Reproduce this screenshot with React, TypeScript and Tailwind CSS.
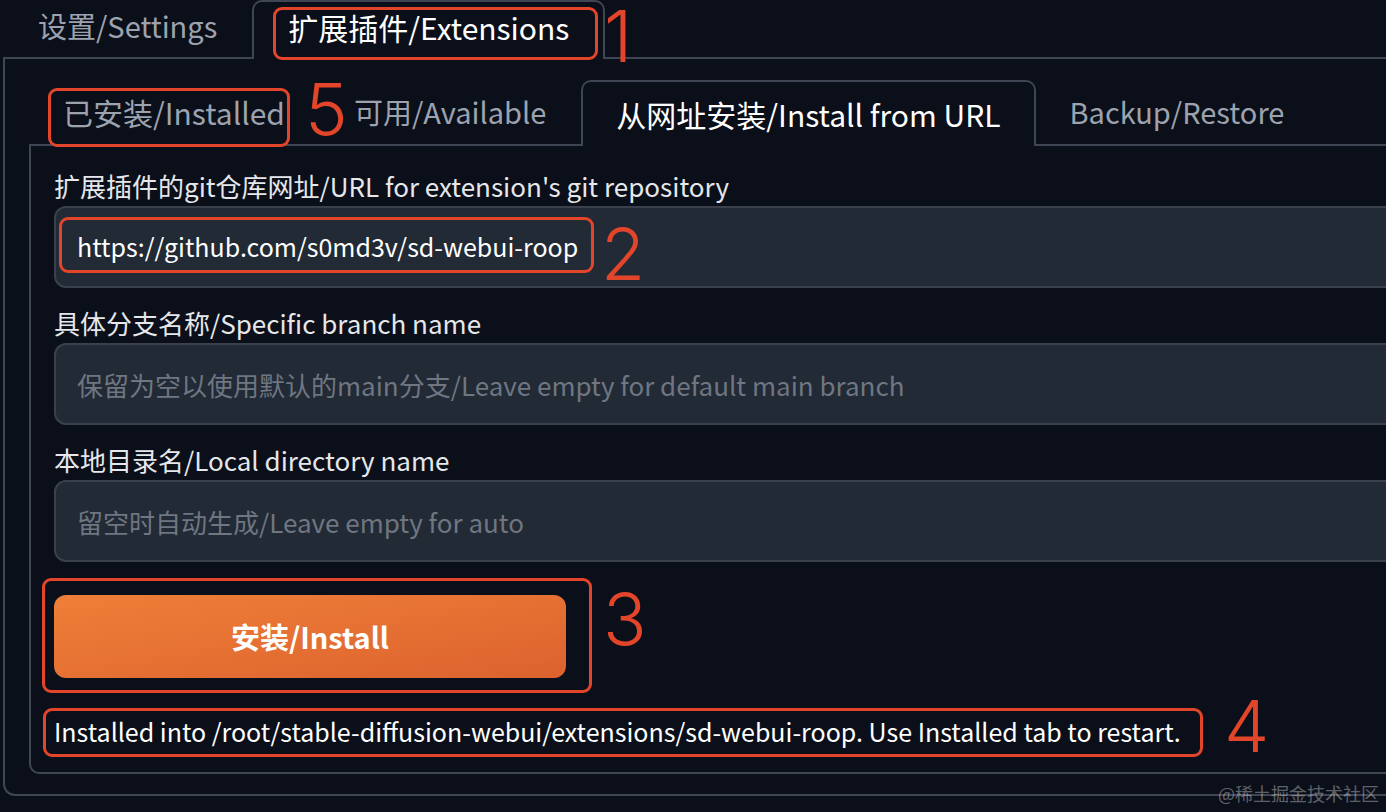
import React from "react";

const line = "border-[#3f4552]";

function Field({ label, value, placeholder }: { label: string; value?: string; placeholder?: string }) {
  return (
    <div className="mt-[17px] first:mt-0">
      <div className="mb-[2px] text-[26px] leading-[36px] text-[#e5e7eb]">{label}</div>
      <div className="flex h-[82px] items-center rounded-[12px] border-2 border-[#3a414d] bg-[#222a36] px-[21px]">
        {value ? (
          <span className="text-[25px] text-white">{value}</span>
        ) : (
          <span className="text-[26px] text-[#6f7681]">{placeholder}</span>
        )}
      </div>
    </div>
  );
}

export default function App() {
  return (
    <div className="relative h-[812px] w-[1386px] overflow-hidden bg-[#0b0f19] font-['Noto_Sans_CJK_SC',sans-serif]">
      <div className="w-[1480px]">
        {/* top tabs */}
        <div className="flex h-[59px] items-end pl-[3px]">
          <div className={`flex h-full items-center border-b-2 ${line} px-[35px] pb-[6px] text-[29px] text-[#9ca3af]`}>设置/Settings</div>
          <div className={`flex h-full items-center rounded-t-[10px] border-x-2 border-t-2 ${line} px-[34px] pb-[6px] text-[30px] text-white`}>
            扩展插件/Extensions
          </div>
          <div className={`h-full flex-1 border-b-2 ${line}`} />
        </div>

        <div className={`ml-[3px] rounded-bl-[12px] border-b-2 border-l-2 ${line} pb-[20px] pl-[24px] pr-[25px] pt-[21px]`}>
          {/* inner tabs */}
          <div className="flex h-[66px] items-end">
            <div className={`flex h-full items-center border-b-2 ${line} px-[34px] text-[30px] text-[#9ca3af]`}>已安装/Installed</div>
            <div className={`flex h-full items-center border-b-2 ${line} px-[35px] text-[29px] text-[#9ca3af]`}>可用/Available</div>
            <div className={`flex h-full items-center rounded-t-[10px] border-x-2 border-t-2 ${line} px-[33px] text-[30px] text-white`}>
              从网址安装/Install from URL
            </div>
            <div className={`flex h-full items-center border-b-2 ${line} px-[34px] text-[29px] text-[#9ca3af]`}>Backup/Restore</div>
            <div className={`h-full flex-1 border-b-2 ${line}`} />
          </div>

          <div className={`rounded-bl-[10px] border-b-2 border-l-2 ${line} pb-[23px] pl-[23px] pr-[24px] pt-[22px]`}>
            <Field label="扩展插件的git仓库网址/URL for extension's git repository" value="https://github.com/s0md3v/sd-webui-roop" />
            <Field label="具体分支名称/Specific branch name" placeholder="保留为空以使用默认的main分支/Leave empty for default main branch" />
            <Field label="本地目录名/Local directory name" placeholder="留空时自动生成/Leave empty for auto" />
            <button className="mt-[33px] flex h-[83px] w-[512px] items-center justify-center rounded-[12px] bg-linear-to-br from-[#ef7f38] to-[#dc622e] text-[29px] font-bold text-white">
              安装/Install
            </button>
            <div className="mt-[35px] text-[25px] leading-[36px] text-white">
              Installed into /root/stable-diffusion-webui/extensions/sd-webui-roop. Use Installed tab to restart.
            </div>
          </div>
        </div>
      </div>

      {/* annotations */}
      <div className="absolute left-[273px] top-[7px] h-[53px] w-[325px] rounded-[9px] border-[3.5px] border-[#e3452b]" />
      <div className="absolute left-[48px] top-[88px] h-[59px] w-[242px] rounded-[9px] border-[3.5px] border-[#e3452b]" />
      <div className="absolute left-[59px] top-[217px] h-[56px] w-[535px] rounded-[9px] border-[3.5px] border-[#e3452b]" />
      <div className="absolute left-[42px] top-[578px] h-[115px] w-[550px] rounded-[9px] border-[3.5px] border-[#e3452b]" />
      <div className="absolute left-[43px] top-[708px] h-[49px] w-[1160px] rounded-[9px] border-[3.5px] border-[#e3452b]" />

      <span className="absolute left-[604px] top-0 font-['Inter',sans-serif] text-[72px] font-light leading-none text-[#e3452b]">1</span>
      <span className="absolute left-[305px] top-[73px] font-['Inter',sans-serif] text-[72px] font-light leading-none text-[#e3452b]">5</span>
      <span className="absolute left-[601px] top-[218px] font-['Inter',sans-serif] text-[72px] font-light leading-none text-[#e3452b]">2</span>
      <span className="absolute left-[603px] top-[583px] font-['Inter',sans-serif] text-[72px] font-light leading-none text-[#e3452b]">3</span>
      <span className="absolute left-[1224px] top-[690px] font-['Inter',sans-serif] text-[72px] font-light leading-none text-[#e3452b]">4</span>

      <span className="absolute left-[1218px] top-[781px] text-[18px] leading-[24px] text-white/35">@稀土掘金技术社区</span>
    </div>
  );
}
